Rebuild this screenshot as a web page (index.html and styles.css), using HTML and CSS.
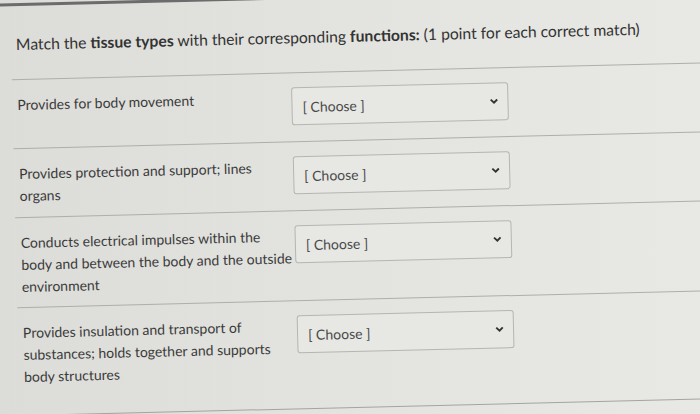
FILE: index.html
```html
<!DOCTYPE html>
<html lang="en">
<head>
<meta charset="utf-8">
<title>Quiz question</title>
<link rel="stylesheet" href="styles.css">
</head>
<body>
<div class="page">
  <div class="question">
    <p class="title">Match the <b>tissue types</b> with their corresponding <b>functions:</b> (1 point for each correct match)</p>
    <div class="answers">
      <div class="row">
        <div class="label">Provides for body movement</div>
        <div class="select"><span>[ Choose ]</span><svg class="chev" viewBox="0 0 10 7" width="9" height="6"><path d="M1.2 1.3 L5 5 L8.8 1.3" fill="none" stroke="#333" stroke-width="2.2"/></svg></div>
      </div>
      <div class="row">
        <div class="label">Provides protection and support; lines organs</div>
        <div class="select"><span>[ Choose ]</span><svg class="chev" viewBox="0 0 10 7" width="9" height="6"><path d="M1.2 1.3 L5 5 L8.8 1.3" fill="none" stroke="#333" stroke-width="2.2"/></svg></div>
      </div>
      <div class="row">
        <div class="label">Conducts electrical impulses within the body and between the body and the outside environment</div>
        <div class="select"><span>[ Choose ]</span><svg class="chev" viewBox="0 0 10 7" width="9" height="6"><path d="M1.2 1.3 L5 5 L8.8 1.3" fill="none" stroke="#333" stroke-width="2.2"/></svg></div>
      </div>
      <div class="row last">
        <div class="label">Provides insulation and transport of substances; holds together and supports body structures</div>
        <div class="select"><span>[ Choose ]</span><svg class="chev" viewBox="0 0 10 7" width="9" height="6"><path d="M1.2 1.3 L5 5 L8.8 1.3" fill="none" stroke="#333" stroke-width="2.2"/></svg></div>
      </div>
    </div>
  </div>
</div>
</body>
</html>
```
FILE: styles.css
```css
html, body {
  margin: 0;
  padding: 0;
}
body {
  width: 700px;
  height: 414px;
  overflow: hidden;
  background: linear-gradient(90deg, #dcdcd8 0%, #e3e3df 50%, #e8e8e5 100%);
  font-family: Lato, "Open Sans", sans-serif;
  color: #3a3a3a;
}
.page {
  width: 712px;
  margin-top: -5px;
  border-top: 3px solid #6c6c6c;
  transform: rotate(-1.4deg);
  transform-origin: 350px 212px;
}
.question {
  padding-top: 26px;
}
.title {
  margin: 0 0 23px 20px;
  font-size: 15.7px;
  line-height: 24px;
  color: #333;
}
.title b {
  font-weight: 700;
}
.answers {
  margin-left: 15px;
}
.row {
  display: flex;
  align-items: flex-start;
  border-top: 1px solid #aeaeaa;
  padding: 14px 0 9px 5px;
}
.row.last {
  padding-bottom: 27px;
  border-bottom: 1px solid #a4a4a0;
}
.label {
  width: 272px;
  margin-right: 2px;
  font-size: 14px;
  line-height: 22px;
  color: #3a3a3a;
}
.select {
  box-sizing: border-box;
  width: 217px;
  height: 38px;
  margin-bottom: 7px;
  border: 1px solid #b5b5b1;
  border-radius: 3px;
  background: #e7e7e4;
  display: flex;
  align-items: center;
  justify-content: space-between;
  padding: 0 9px 0 10px;
  font-size: 14px;
  color: #4a4a4a;
}
.chev {
  display: block;
}
```
